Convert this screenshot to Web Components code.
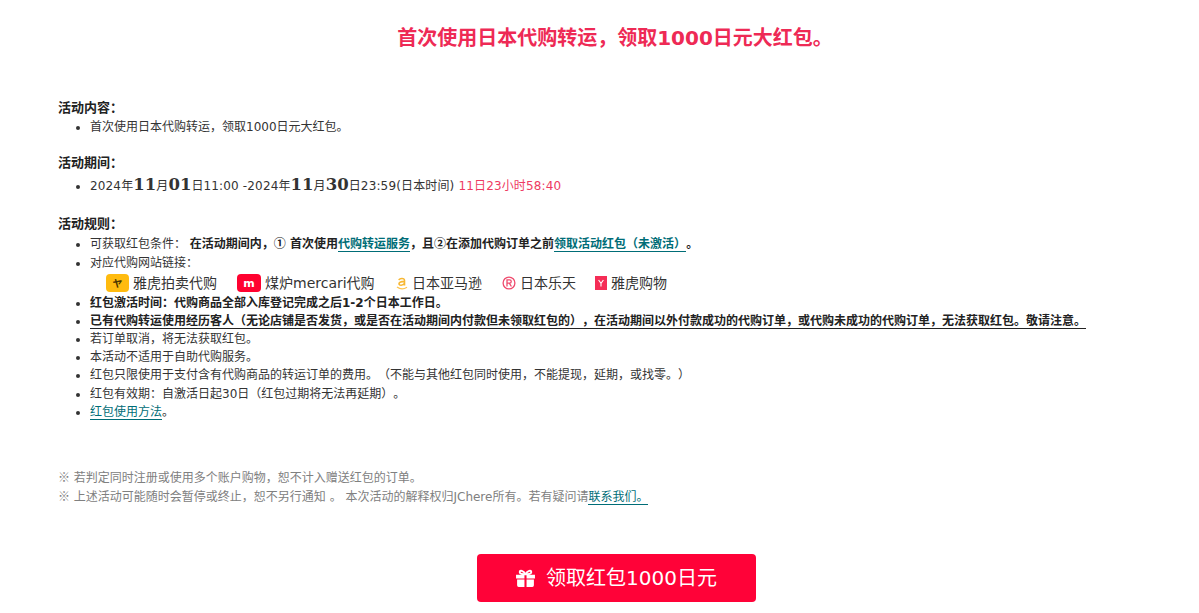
<!DOCTYPE html>
<html lang="zh">
<head>
<meta charset="utf-8">
<title>领取1000日元大红包</title>
<style>
html,body{margin:0;padding:0;background:#fff}
body{font:12px/18px "DejaVu Sans","Noto Sans CJK SC",sans-serif;color:#333;overflow:hidden;text-spacing-trim:space-all}
li{line-height:18.2px}
li:first-child{margin-bottom:.8px}
a{color:#006d77;text-decoration:none;border-bottom:1px solid #006d77}
b{color:#222}
.date{letter-spacing:.15px}
.big{font:700 16.5px/0 "DejaVu Serif",serif;color:#333;letter-spacing:0}
.red{color:#ee3a62}
.line{border-bottom:1px solid #222}
.cjk{font-family:"Noto Sans CJK SC",sans-serif;line-height:0}
</style>
</head>
<body>
<promo-page>
  <span slot="title">首次使用日本代购转运，领取1000日元大红包。</span>

  <promo-section heading="活动内容：" style="--gap:17px;--item:1px">
    <li>首次使用日本代购转运，领取1000日元大红包。</li>
  </promo-section>

  <promo-section heading="活动期间：" style="--gap:19px;--item:5px">
    <li class="date">2024年<b class="big">11</b>月<b class="big">01</b>日11:00 -2024年<b class="big">11</b>月<b class="big">30</b>日23:59(日本时间) <span class="red">11日23小时58:40</span></li>
  </promo-section>

  <promo-section heading="活动规则：" style="--item:2px">
    <li>可获取红包条件： <b>在活动期间内，<span class="cjk">①</span> 首次使用<a>代购转运服务</a>，且<span class="cjk">②</span>在添加代购订单之前<a>领取活动红包（未激活）</a>。</b></li>
    <li>对应代购网站链接：
      <site-links>
        <site-link label="雅虎拍卖代购" style="--w:131px"><svg viewBox="0 0 23 18" width="23" height="18"><rect width="23" height="18" rx="4" fill="#ffbb0f"/><text x="11.500" y="13" text-anchor="middle" font-family="Noto Sans CJK JP" font-size="10" font-weight="700" fill="#4a3500">ヤ</text></svg></site-link>
        <site-link label="煤炉mercari代购" style="--w:159px"><svg viewBox="0 0 24 18" width="24" height="18"><rect width="24" height="18" rx="4" fill="#ff0230"/><text x="12" y="13" text-anchor="middle" font-family="DejaVu Sans" font-size="11" font-weight="700" fill="#fff">m</text></svg></site-link>
        <site-link label="日本亚马逊" style="--w:106px"><svg viewBox="0 0 12 16" width="12" height="16"><path d="M3 5.200C3.400 3.200 8.500 2.600 8.500 5.400V10.500M8.500 6.400C5.500 6.600 3 7 3 8.800 3 10.800 7 10.600 8.500 8.400" fill="none" stroke="#f7b733" stroke-width="1.600"/><path d="M1 12C4 14.200 8 14.200 11 12.200" fill="none" stroke="#ffc44d" stroke-width="1.300"/></svg></site-link>
        <site-link label="日本乐天" style="--w:93px"><svg viewBox="0 0 14 14" width="14" height="14"><circle cx="7" cy="7" r="5.900" fill="none" stroke="#ef4a6d" stroke-width="1.300"/><path d="M5 10.500V3.900H7.600C9.800 3.900 9.800 7.100 7.600 7.100H5M7.300 7.100 9.400 10.500" fill="none" stroke="#ef4a6d" stroke-width="1.300"/></svg></site-link>
        <site-link label="雅虎购物" style="--w:80px"><svg viewBox="0 0 12 14" width="12" height="14"><rect width="12" height="14" fill="#f52d56"/><path d="M3.600 4 6 7.400 8.400 4M6 7.400V10.500" fill="none" stroke="#fff" stroke-width="1.100"/></svg></site-link>
      </site-links>
    </li>
    <li><b>红包激活时间：代购商品全部入库登记完成之后1-2个日本工作日。</b></li>
    <li><b class="line">已有代购转运使用经历客人（无论店铺是否发货，或是否在活动期间内付款但未领取红包的），在活动期间以外付款成功的代购订单，或代购未成功的代购订单，无法获取红包。敬请注意。</b></li>
    <li>若订单取消，将无法获取红包。</li>
    <li>本活动不适用于自助代购服务。</li>
    <li>红包只限使用于支付含有代购商品的转运订单的费用。（不能与其他红包同时使用，不能提现，延期，或找零。）</li>
    <li>红包有效期：自激活日起30日（红包过期将无法再延期）。</li>
    <li><a>红包使用方法</a>。</li>
  </promo-section>

  <promo-notes>
    <p><span class="cjk">※</span> 若判定同时注册或使用多个账户购物，恕不计入赠送红包的订单。</p>
    <p><span class="cjk">※</span> 上述活动可能随时会暂停或终止，恕不另行通知 。 本次活动的解释权归JChere所有。若有疑问请<a>联系我们。</a></p>
  </promo-notes>

  <claim-button slot="action">领取红包1000日元</claim-button>
</promo-page>

<script>
class PromoPage extends HTMLElement{
constructor(){
  super();
  this.attachShadow({mode:'open'}).innerHTML=`<style>
:host{display:block;height:613px;box-sizing:border-box;padding:0 58px}
h1{margin:0;padding:24px 0 0 31px;height:98px;box-sizing:border-box;font:700 20px/28px "DejaVu Sans","Noto Sans CJK SC",sans-serif;color:#ee2a55;text-align:center}
.action{display:flex;justify-content:center;padding-left:33px;margin-top:47px}
</style><h1><slot name="title"></slot></h1><slot></slot><div class="action"><slot name="action"></slot></div>`;
}
}

class PromoSection extends HTMLElement{
constructor(){
  super();
  this.attachShadow({mode:'open'}).innerHTML=`<style>
:host{display:block;margin-bottom:var(--gap,0)}
h2{margin:0;font:700 13px/19px "DejaVu Sans","Noto Sans CJK SC",sans-serif;color:#222}
ul{margin:0;padding:var(--item,0) 0 0 32px}
</style><h2></h2><ul><slot></slot></ul>`;
}
connectedCallback(){
  this.shadowRoot.querySelector('h2').textContent=this.getAttribute('heading');
}
}

class SiteLinks extends HTMLElement{
constructor(){
  super();
  this.attachShadow({mode:'open'}).innerHTML=`<style>
:host{display:flex;align-items:center;height:21px;padding-left:16px;white-space:nowrap}
</style><slot></slot>`;
}
}

class SiteLink extends HTMLElement{
constructor(){
  super();
  this.attachShadow({mode:'open'}).innerHTML=`<style>
:host{display:flex;align-items:center;gap:4px;width:var(--w);font-size:14px;line-height:18px;color:#333}
::slotted(svg){display:block}
</style><slot></slot><span></span>`;
}
connectedCallback(){
  this.shadowRoot.querySelector('span').textContent=this.getAttribute('label');
}
}

class PromoNotes extends HTMLElement{
constructor(){
  super();
  this.attachShadow({mode:'open'}).innerHTML=`<style>
:host{display:block;margin-top:48px;color:#808080}
::slotted(p){margin:0;line-height:19px}
</style><slot></slot>`;
}
}

class ClaimButton extends HTMLElement{
constructor(){
  super();
  this.attachShadow({mode:'open'}).innerHTML=`<style>
:host{display:flex;align-items:center;justify-content:center;gap:10px;width:279px;height:48px;background:#ff0238;border-radius:4px;color:#fff;font-size:20px;cursor:pointer}
svg{display:block}
</style><svg viewBox="0 0 20 20" width="21" height="21"><path fill="#fff" d="M1 6.500h8v3.500H1zM11 6.500h8v3.500h-8zM2 11h7v7H3.500A1.500 1.500 0 0 1 2 16.500zM11 11h7v5.500A1.500 1.500 0 0 1 16.500 18H11z"/><path fill="none" stroke="#fff" stroke-width="1.800" d="M10 6C8 2.500 4.500 1.500 4.500 4c0 1.500 2.500 2 5.500 2zM10 6c2-3.500 5.500-4.500 5.500-2 0 1.500-2.500 2-5.500 2z"/></svg><span><slot></slot></span>`;
}
}

customElements.define('promo-page',PromoPage);
customElements.define('promo-section',PromoSection);
customElements.define('site-links',SiteLinks);
customElements.define('site-link',SiteLink);
customElements.define('promo-notes',PromoNotes);
customElements.define('claim-button',ClaimButton);
</script>
</body>
</html>
